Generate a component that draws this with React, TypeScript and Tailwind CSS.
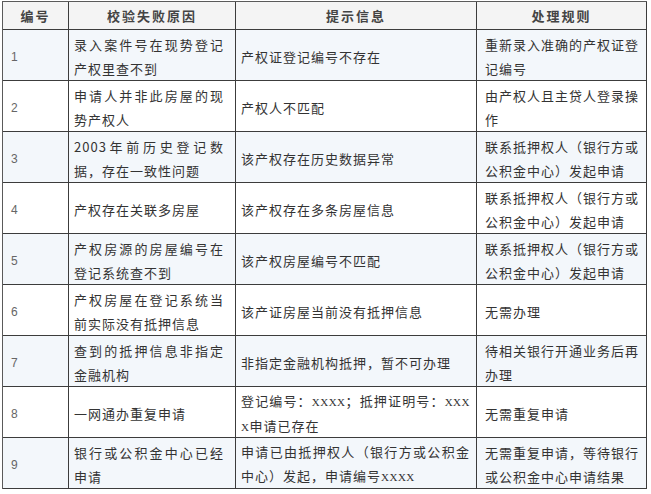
// 校验失败原因一览表
type Row = { n: string; reason: string[]; tip: string[]; rule: string[] };

const CONTACT = ["联系抵押权人（银行方或", "公积金中心）发起申请"];

const ROWS: Row[] = [
  { n: "1", reason: ["录入案件号在现势登记", "产权里查不到"], tip: ["产权证登记编号不存在"], rule: ["重新录入准确的产权证登", "记编号"] },
  { n: "2", reason: ["申请人并非此房屋的现", "势产权人"], tip: ["产权人不匹配"], rule: ["由产权人且主贷人登录操", "作"] },
  { n: "3", reason: ["2003年前历史登记数", "据，存在一致性问题"], tip: ["该产权存在历史数据异常"], rule: CONTACT },
  { n: "4", reason: ["产权存在关联多房屋"], tip: ["该产权存在多条房屋信息"], rule: CONTACT },
  { n: "5", reason: ["产权房源的房屋编号在", "登记系统查不到"], tip: ["该产权房屋编号不匹配"], rule: CONTACT },
  { n: "6", reason: ["产权房屋在登记系统当", "前实际没有抵押信息"], tip: ["该产证房屋当前没有抵押信息"], rule: ["无需办理"] },
  { n: "7", reason: ["查到的抵押信息非指定", "金融机构"], tip: ["非指定金融机构抵押，暂不可办理"], rule: ["待相关银行开通业务后再", "办理"] },
  { n: "8", reason: ["一网通办重复申请"], tip: ["登记编号：XXXX；抵押证明号：XXX", "X申请已存在"], rule: ["无需重复申请"] },
  { n: "9", reason: ["银行或公积金中心已经", "申请"], tip: ["申请已由抵押权人（银行方或公积金", "中心）发起，申请编号XXXX"], rule: ["无需重复申请，等待银行", "或公积金中心申请结果"] },
];

// the "X" placeholders are set in a narrow serif, like the original
function Txt({ s }: { s: string }) {
  const parts = s.split(/(X+)/);
  return (
    <>
      {parts.map((p, i) =>
        /^X+$/.test(p) ? (
          <span key={i} className="font-['Liberation_Serif',serif] text-[11px] tracking-[0.5px]">{p}</span>
        ) : (
          <span key={i}>{p}</span>
        )
      )}
    </>
  );
}

function Lines({ lines, justify }: { lines: string[]; justify?: boolean }) {
  return (
    <div className="w-full">
      {lines.map((l, i) => (
        <div key={i} className={`whitespace-nowrap ${justify && i < lines.length - 1 ? "text-justify [text-align-last:justify]" : ""}`}>
          <Txt s={l} />
        </div>
      ))}
    </div>
  );
}

const cell = "flex items-center border-r border-b border-[#3c3c3c]";

export default function App() {
  return (
    <div className="min-h-[494px] bg-white pt-px pl-[2px] font-['Noto_Sans_CJK_SC','Noto_Sans',sans-serif] text-[13px] leading-[24px] tracking-[1px] text-[#333]">
      <div className="grid w-[645px] grid-cols-[66px_167px_241px_170px] border-t border-l border-[#5a5a5a]">
        {["编号", "校验失败原因", "提示信息", "处理规则"].map((h) => (
          <div key={h} className={`${cell} h-[28px] justify-center bg-[#f4f4f4] pt-px font-bold tracking-[2px] text-[#444]`}>
            {h}
          </div>
        ))}
        {ROWS.map((r, i) => {
          const bg = i % 2 === 0 ? "bg-[#f3f7fb]" : "bg-white";
          return (
            <div key={r.n} className="contents">
              <div className={`${cell} ${bg} h-[51px] pt-[3px] pl-[8px] font-['Liberation_Sans',sans-serif] text-[12px] tracking-normal text-[#666]`}>{r.n}</div>
              <div className={`${cell} ${bg} h-[51px] pt-[3px] pr-[11px] pl-[5px]`}>
                <Lines lines={r.reason} justify />
              </div>
              <div className={`${cell} ${bg} h-[51px] pt-[3px] pr-[6px] pl-[5px]`}>
                <Lines lines={r.tip} justify />
              </div>
              <div className={`${cell} ${bg} h-[51px] pt-[3px] pr-[4px] pl-[8px]`}>
                <Lines lines={r.rule} />
              </div>
            </div>
          );
        })}
      </div>
    </div>
  );
}
